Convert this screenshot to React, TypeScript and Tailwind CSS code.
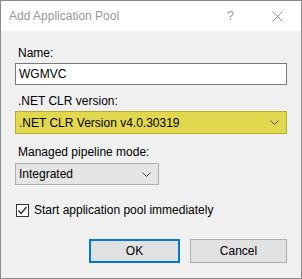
import React from 'react';

function Chevron() {
  return (
    <svg width="9" height="5" viewBox="0 0 9 5" className="shrink-0">
      <path d="M0.5 0.5 L4.5 4.5 L8.5 0.5" fill="none" stroke="#444" strokeWidth="1" />
    </svg>
  );
}

export default function App() {
  return (
    <div
      className="w-[302px] h-[279px] border border-[#8c8c8c] bg-[#f0f0f0] flex flex-col text-[12px] text-black"
      style={{ fontFamily: '"Liberation Sans", "Noto Sans", sans-serif' }}
    >
      {/* title bar */}
      <div className="h-[30px] bg-white flex items-center pl-[8px] text-[#999999] shrink-0">
        <span className="text-[12px]">Add Application Pool</span>
        <span className="ml-auto mr-[38px] text-[13px]">?</span>
        <svg width="11" height="11" viewBox="0 0 11 11" className="mr-[18px]">
          <path d="M0.5 0.5 L10.5 10.5 M10.5 0.5 L0.5 10.5" stroke="#999" strokeWidth="1" />
        </svg>
      </div>

      {/* body */}
      <div className="flex flex-col px-[14px] pt-[14px]">
        <label className="h-[16px] leading-[16px] pl-[3px]">Name:</label>
        <div className="mt-[2px] h-[22px] bg-white border border-[#7a7a7a] flex items-center pl-[3px]">
          WGMVC
        </div>

        <label className="mt-[8px] h-[16px] leading-[16px] pl-[3px]">.NET CLR version:</label>
        <div className="mt-[2px] h-[23px] bg-[#e2d84f] border border-[#b8ac2c] flex items-center pl-[3px] pr-[7px]">
          <span>.NET CLR Version v4.0.30319</span>
          <span className="ml-auto">
            <Chevron />
          </span>
        </div>

        <label className="mt-[10px] h-[16px] leading-[16px] pl-[3px]">Managed pipeline mode:</label>
        <div className="mt-[3px] w-[144px] h-[22px] bg-[#e5e5e5] border border-[#adadad] flex items-center pl-[3px] pr-[7px]">
          <span>Integrated</span>
          <span className="ml-auto">
            <Chevron />
          </span>
        </div>

        <div className="mt-[18px] flex items-center gap-[5px] pl-[1px] h-[14px]">
          <div className="w-[13px] h-[13px] bg-white border border-[#333] flex items-center justify-center">
            <svg width="11" height="11" viewBox="0 0 11 11">
              <path d="M1.5 5.5 L4 8.5 L9.5 2" fill="none" stroke="#222" strokeWidth="1.2" />
            </svg>
          </div>
          <span>Start application pool immediately</span>
        </div>

        <div className="mt-[22px] flex justify-end gap-[10px]">
          <button className="w-[91px] h-[24px] bg-[#e1e1e1] border-2 border-[#0078d7] flex items-center justify-center">
            OK
          </button>
          <button className="w-[97px] h-[24px] bg-[#e1e1e1] border border-[#adadad] flex items-center justify-center">
            Cancel
          </button>
        </div>
      </div>
    </div>
  );
}
